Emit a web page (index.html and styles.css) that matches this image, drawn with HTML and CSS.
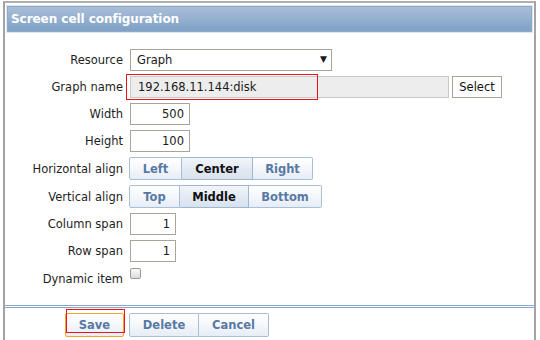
FILE: index.html
```html
<!DOCTYPE html>
<html>
<head>
<meta charset="utf-8">
<link rel="stylesheet" href="styles.css">
</head>
<body>
<div class="window">
  <div class="header"><span class="title">Screen cell configuration</span></div>
  <div class="form">
    <label class="lbl">Resource</label>
    <div class="ctl"><div class="select">Graph<span class="arrow">▼</span></div></div>

    <label class="lbl">Graph name</label>
    <div class="ctl">
      <div class="graph-wrap">
        <div class="text-ro">192.168.11.144:disk</div>
        <div class="mark mark-graph"></div>
      </div>
      <button class="btn-select">Select</button>
    </div>

    <label class="lbl">Width</label>
    <div class="ctl"><div class="num w60">500</div></div>

    <label class="lbl">Height</label>
    <div class="ctl"><div class="num w60">100</div></div>

    <label class="lbl">Horizontal align</label>
    <div class="ctl">
      <div class="group">
        <span class="seg s-left">Left</span><span class="seg sel s-center">Center</span><span class="seg s-right">Right</span>
      </div>
    </div>

    <label class="lbl">Vertical align</label>
    <div class="ctl">
      <div class="group">
        <span class="seg s-top">Top</span><span class="seg sel s-middle">Middle</span><span class="seg s-bottom">Bottom</span>
      </div>
    </div>

    <label class="lbl">Column span</label>
    <div class="ctl"><div class="num w46">1</div></div>

    <label class="lbl">Row span</label>
    <div class="ctl"><div class="num w46">1</div></div>

    <label class="lbl lbl-dyn">Dynamic item</label>
    <div class="ctl ctl-dyn"><span class="check"></span></div>
  </div>
  <div class="sep"></div>
  <div class="footer">
    <div class="save-wrap">
      <span class="fbtn save">Save</span>
      <div class="mark mark-save"></div>
    </div>
    <div class="group fgroup">
      <span class="fbtn f-del">Delete</span><span class="fbtn f-cancel">Cancel</span>
    </div>
  </div>
</div>
</body>
</html>
```

FILE: styles.css
```css
html, body {
  margin: 0;
  padding: 0;
  background: #ffffff;
  width: 540px;
  height: 340px;
  overflow: hidden;
}

body {
  font-family: "DejaVu Sans", Verdana, sans-serif;
  font-size: 12px;
  color: #1a1a1a;
}

.window {
  margin: 1px 0 0 3px;
  width: 529px;
  height: 345px;
  border-left: 2px solid #a3a3a3;
  border-top: 2px solid #b0b0b0;
  border-right: 2px solid #a3a3a3;
  position: relative;
}

.header {
  margin: 3px 2px 0 2px;
  height: 24px;
  border: 1px solid #8eabcb;
  box-shadow: 0 0 0 1px #dce6f1;
  background: linear-gradient(to bottom, #a9bed7 0%, #97b1cf 45%, #7da1c6 100%);
  display: flex;
  align-items: center;
  padding-left: 3px;
}

.title {
  color: #ffffff;
  font-weight: bold;
  font-size: 12px;
  letter-spacing: -0.05px;
}

.form {
  display: grid;
  grid-template-columns: 118px auto;
  column-gap: 7px;
  row-gap: 5px;
  padding-top: 17px;
  align-items: center;
}

.lbl {
  text-align: right;
  font-size: 11.5px;
  color: #1e1e1e;
}

.ctl {
  display: flex;
  align-items: center;
}

.select {
  width: 194px;
  height: 20px;
  border: 1px solid #a8a596;
  display: flex;
  align-items: center;
  padding-left: 6px;
  box-sizing: content-box;
  position: relative;
  font-size: 11.5px;
}

.arrow {
  position: absolute;
  right: 4px;
  top: 4px;
  font-size: 9px;
}

.graph-wrap {
  position: relative;
}

.text-ro {
  width: 310px;
  height: 20px;
  border: 1px solid #c9c9c9;
  background: #ededed;
  padding-left: 7px;
  display: flex;
  align-items: center;
  font-size: 11.5px;
}

.mark {
  position: absolute;
  border: 1px solid #e8141c;
}

.mark-graph {
  left: -4px;
  top: -2px;
  width: 190px;
  height: 24px;
}

.btn-select {
  margin-left: 3px;
  height: 22px;
  width: 50px;
  border: 1px solid #a8a596;
  background: #ffffff;
  font-family: "DejaVu Sans", Verdana, sans-serif;
  font-size: 11.5px;
  color: #111;
  padding: 0;
}

.num {
  height: 20px;
  border: 1px solid #a8a596;
  display: flex;
  align-items: center;
  justify-content: flex-end;
  padding-right: 5px;
  font-size: 11.5px;
}

.w60 { width: 53px; }
.w46 { width: 39px; }

.group {
  display: flex;
  margin-left: -1px;
}

.seg, .fbtn {
  height: 21px;
  display: flex;
  align-items: center;
  justify-content: center;
  border: 1px solid #a9bfd8;
  background: linear-gradient(to bottom, #ffffff 0%, #f4f7fb 50%, #e6edf6 100%);
  color: #5879a4;
  font-weight: bold;
  font-size: 11.5px;
  box-sizing: content-box;
}

.seg + .seg, .fbtn + .fbtn {
  border-left: none;
}

.seg.sel {
  background: linear-gradient(to bottom, #f2f5f9 0%, #e3eaf3 50%, #d8e2ee 100%);
  color: #111;
  border-color: #9fb6d1;
}

.s-left { width: 51px; border-radius: 2px 0 0 2px; }
.s-center { width: 70px; }
.s-right { width: 59px; border-radius: 0 2px 2px 0; }
.s-top { width: 49px; border-radius: 2px 0 0 2px; }
.s-middle { width: 68px; }
.s-bottom { width: 72px; border-radius: 0 2px 2px 0; }

.lbl-dyn {
  align-self: end;
  padding-top: 5px;
}

.ctl-dyn {
  align-self: start;
}

.check {
  width: 9px;
  height: 9px;
  border: 1px solid #9a9a9a;
  border-radius: 2px;
  background: linear-gradient(to bottom, #fafafa, #dcdcdc);
  margin-top: 1px;
}

.sep {
  margin-top: 19px;
  height: 1px;
  border-top: 1px solid #8ba6c6;
  border-bottom: 1px solid #8ba6c6;
}

.footer {
  display: flex;
  padding-left: 60px;
  padding-top: 5px;
  gap: 6px;
}

.save-wrap {
  position: relative;
}

.fbtn.save {
  width: 57px;
  height: 22px;
  border: 1px solid #f0a52c;
  border-radius: 2px;
}

.mark-save {
  left: 1px;
  top: -4px;
  width: 57px;
  height: 22px;
}

.fbtn {
  height: 22px;
}

.f-del { width: 68px; border-radius: 2px 0 0 2px; }
.f-cancel { width: 69px; border-radius: 0 2px 2px 0; }
```
